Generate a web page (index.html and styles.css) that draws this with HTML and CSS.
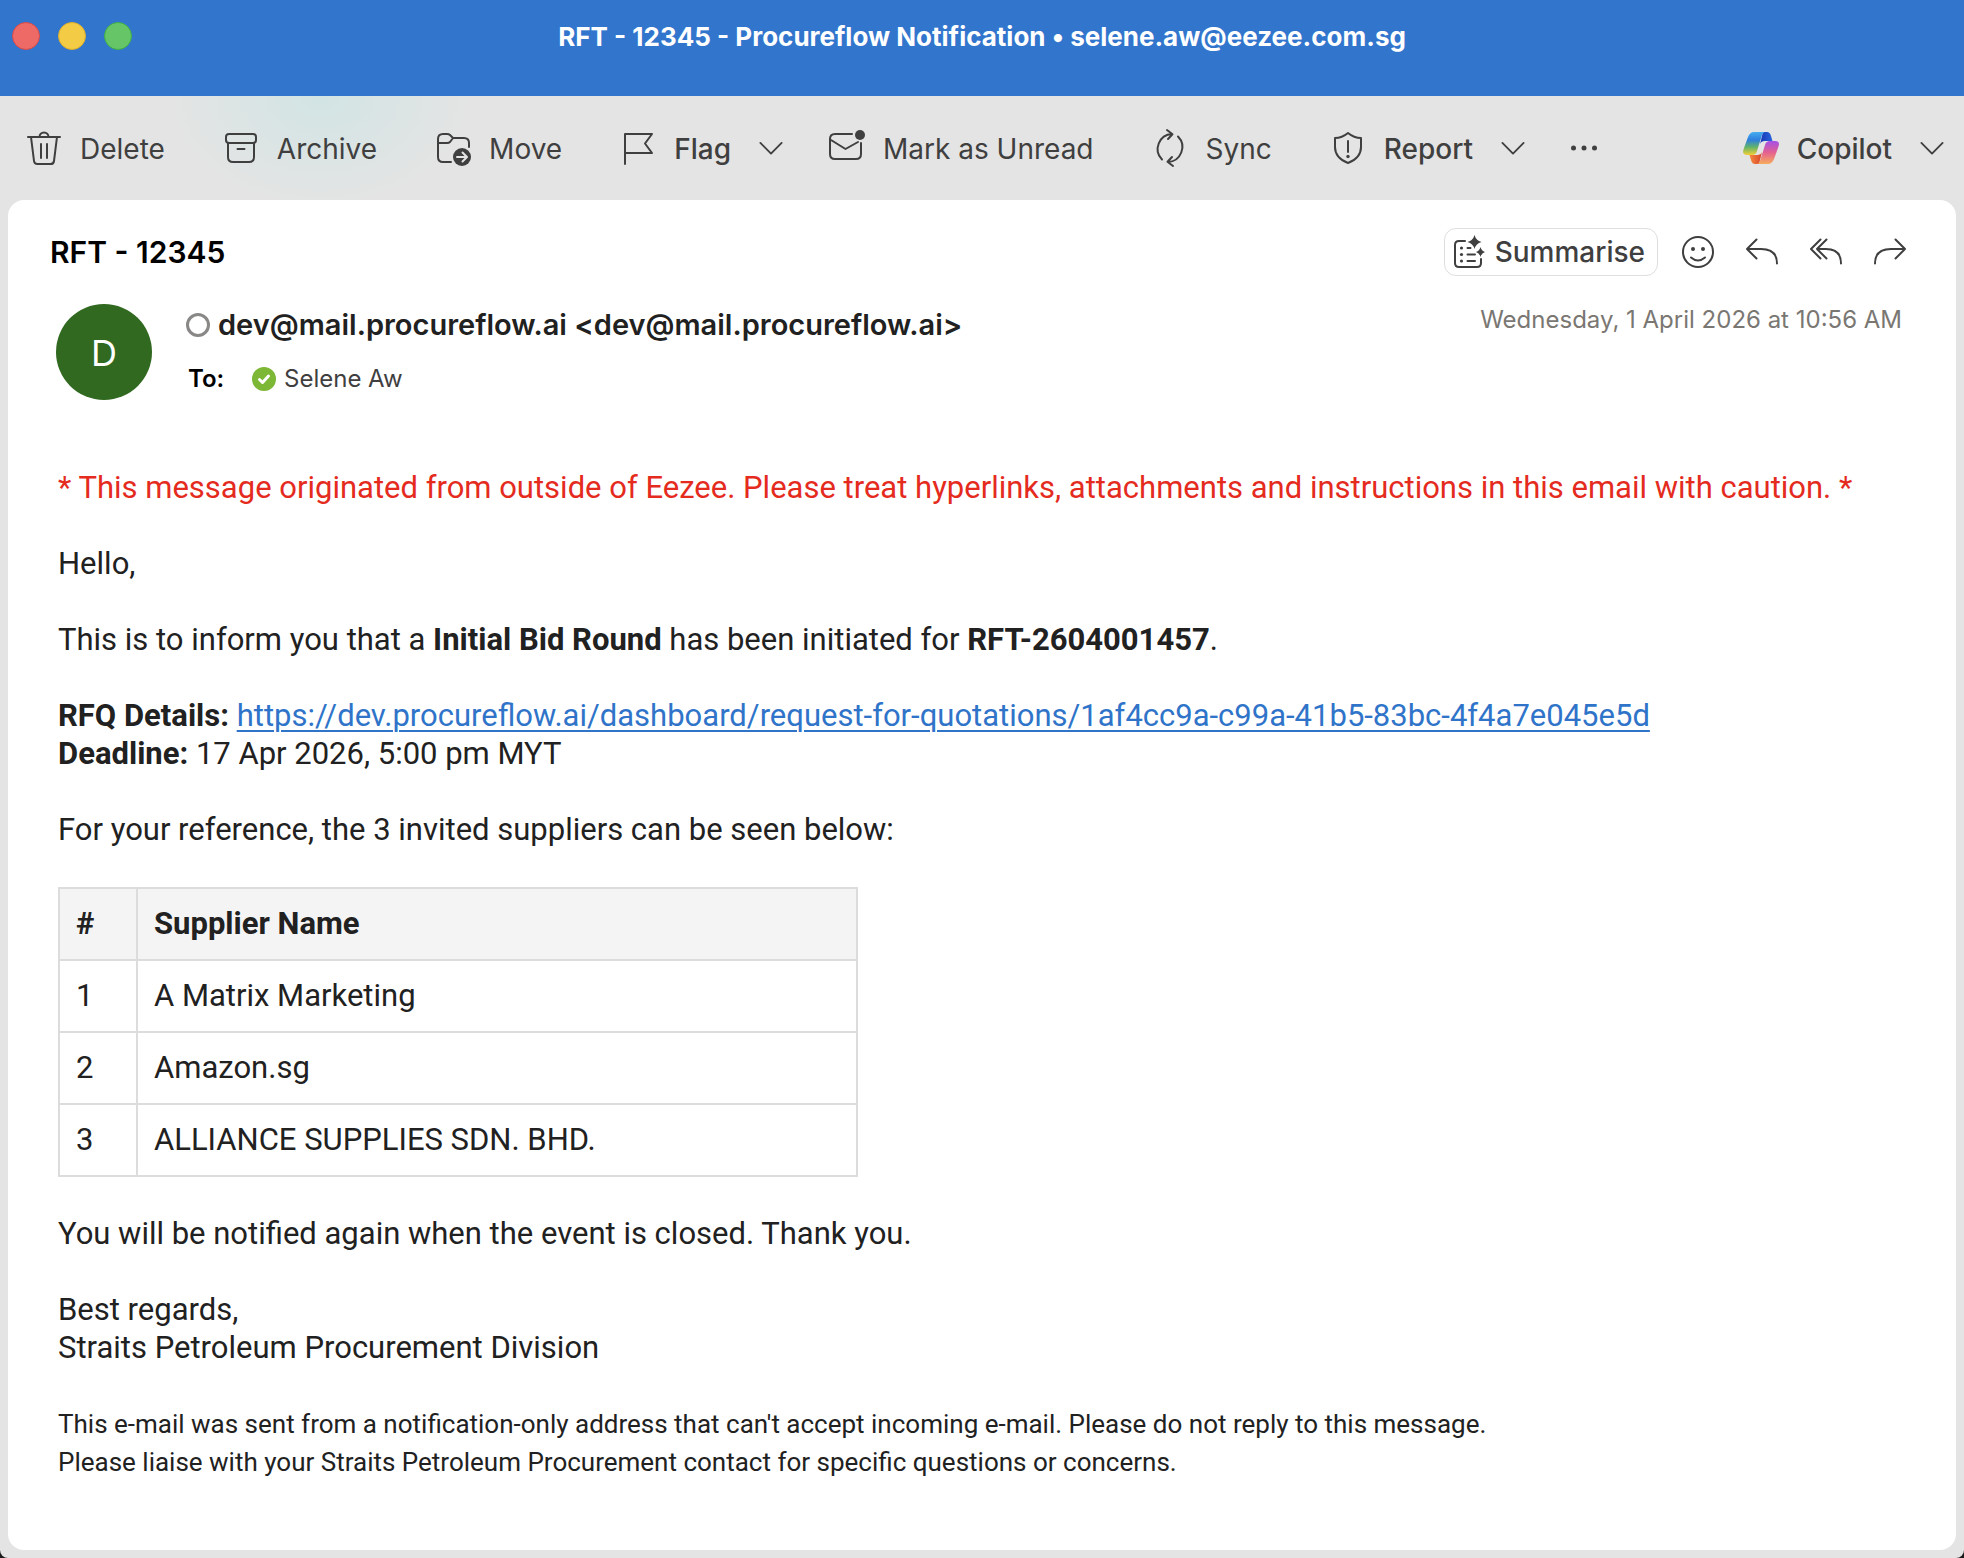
FILE: index.html
```html
<!DOCTYPE html>
<html lang="en">
<head>
  <meta charset="UTF-8" />
  <title>RFT - 12345 - Procureflow Notification</title>
  <meta name="viewport" content="width=device-width, initial-scale=1.0" />
  <link rel="stylesheet" href="styles.css">
</head>
<body>
  <div class="window">
    <header class="titlebar">
      <div class="lights">
        <button class="light red" aria-label="Close"></button>
        <button class="light yellow" aria-label="Minimise"></button>
        <button class="light green" aria-label="Zoom"></button>
      </div>
      <div class="window-title">RFT - 12345 - Procureflow Notification • selene.aw@eezee.com.sg</div>
    </header>

    <nav class="toolbar">
      <button class="tool">
        <svg class="icon" viewBox="0 0 36 36"><path d="M2 7H34M13.500 7a4.500 4.500 0 0 1 9 0M5 7l3 24q.4 3 3.400 3h13.200q3 0 3.400-3l3-24M15 14v14M21 14v14"/></svg>
        <span>Delete</span>
      </button>
      <button class="tool">
        <svg class="icon" viewBox="0 0 36 36"><rect x="3" y="4" width="30" height="9" rx="3"/><path d="M5 13v14q0 5 5 5h16q5 0 5-5V13M14.500 19h7"/></svg>
        <span>Archive</span>
      </button>
      <button class="tool">
        <svg class="icon" viewBox="0 0 36 36"><path d="M16 32H8q-5 0-5-5V9q0-5 5-5h4q2 0 3 1l3 3h11q5 0 5 5v4M3 13h9q2 0 3-1l3-4"/><circle class="solid" cx="27" cy="27" r="9"/><path class="knock" d="M22 27h9M27.500 22.500L32 27l-4.500 4.500"/></svg>
        <span>Move</span>
      </button>
      <button class="tool dropdown">
        <svg class="icon" viewBox="0 0 36 36"><path d="M5 34V4H32L25 13.500L32 23H5"/></svg>
        <span>Flag</span>
        <svg class="chevron" viewBox="0 0 26 26"><path d="M1.500 7.500L13 19L24.500 7.500"/></svg>
      </button>
      <button class="tool">
        <svg class="icon" viewBox="0 0 36 36"><path d="M23 4H6q-5 0-5 5v15q0 5 5 5h21q5 0 5-5V13M2 10l14.500 9L29 12"/><circle class="solid" cx="31" cy="5" r="5"/></svg>
        <span>Mark as Unread</span>
      </button>
      <button class="tool">
        <svg class="icon" viewBox="0 0 36 36"><path d="M10 29.500A15 15 0 0 1 20 4M15 0l5.500 4.200L16 9M26 6.500A15 15 0 0 1 16 32M21 36l-5.500-4.200L20 27"/></svg>
        <span>Sync</span>
      </button>
      <button class="tool dropdown">
        <svg class="icon" viewBox="0 0 36 36"><path d="M18 3q6 5 13 5v9q0 11-13 16Q5 28 5 17V8q7 0 13-5ZM18 11v11"/><circle class="solid" cx="18" cy="26.500" r="1.700"/></svg>
        <span>Report</span>
        <svg class="chevron" viewBox="0 0 26 26"><path d="M1.500 7.500L13 19L24.500 7.500"/></svg>
      </button>
      <button class="tool" aria-label="More">
        <svg class="dots" viewBox="0 0 26 26"><g class="solid"><circle cx="2.500" cy="13" r="2.500"/><circle cx="13" cy="13" r="2.500"/><circle cx="23.500" cy="13" r="2.500"/></g></svg>
      </button>
      <button class="tool dropdown copilot">
        <svg class="icon" viewBox="0 -2 36 36">
          <defs>
            <linearGradient id="cool" x1="0" y1="0" x2="0" y2="1"><stop offset="0" stop-color="#45aef0"/><stop offset=".35" stop-color="#2f7fdd"/><stop offset=".65" stop-color="#5fb36b"/><stop offset="1" stop-color="#f3cf35"/></linearGradient>
            <linearGradient id="warm" x1="0" y1="1" x2="0" y2="0"><stop offset="0" stop-color="#a44fe8"/><stop offset=".5" stop-color="#e4618f"/><stop offset="1" stop-color="#f7ac5c"/></linearGradient>
            <linearGradient id="navy"><stop offset="0" stop-color="#1736b5"/><stop offset="1" stop-color="#2a66dd"/></linearGradient>
            <linearGradient id="ember"><stop offset="0" stop-color="#d6452c"/><stop offset="1" stop-color="#f78a3e"/></linearGradient>
          </defs>
          <path fill="url(#navy)" stroke="none" d="M20 0h4q3 0 4 4l1.500 5H22q-4 0-5 3z"/>
          <path fill="url(#ember)" stroke="none" transform="rotate(180 18 16)" d="M20 0h4q3 0 4 4l1.500 5H22q-4 0-5 3z"/>
          <path fill="url(#cool)" stroke="none" d="M22.500 0H11Q7 0 5 5L1 16Q-2 23 4 23h5q4 0 5-4l4.500-14.500Q19.500 0 22.500 0Z"/>
          <path fill="url(#warm)" stroke="none" transform="rotate(180 18 16)" d="M22.500 0H11Q7 0 5 5L1 16Q-2 23 4 23h5q4 0 5-4l4.500-14.500Q19.500 0 22.500 0Z"/>
        </svg>
        <span>Copilot</span>
        <svg class="chevron" viewBox="0 0 26 26"><path d="M1.500 7.500L13 19L24.500 7.500"/></svg>
      </button>
    </nav>

    <main class="message">
      <div class="subject-row">
        <h1>RFT - 12345</h1>
        <div class="actions">
          <button class="summarise">
            <svg class="small-icon" viewBox="0 0 32 32"><path d="M12 5H6Q2 5 2 9v18q0 4 4 4h18q4 0 4-4v-4M14.500 12h3M14.500 18.500H22M14.500 25H22"/><g class="solid"><circle cx="8.500" cy="12" r="1.600"/><circle cx="8.500" cy="18.500" r="1.600"/><circle cx="8.500" cy="25" r="1.600"/><path d="M21.500-1q1.500 5.500 7 7-5.500 1.500-7 7-1.500-5.500-7-7 5.500-1.500 7-7ZM27.500 11q1 4 4.500 5-3.500 1-4.500 5-1-4-4.500-5 3.500-1 4.500-5Z"/></g></svg>
            <span>Summarise</span>
          </button>
          <button class="action" aria-label="React"><svg class="small-icon" viewBox="0 0 32 32"><circle cx="16" cy="16" r="15"/><path d="M9 21.500q7 6 14 0"/><g class="solid"><circle cx="11" cy="13" r="2"/><circle cx="21" cy="13" r="2"/></g></svg></button>
          <button class="action" aria-label="Reply"><svg class="small-icon" viewBox="0 0 32 32"><path d="M10.500 3.500L1 13l9.500 9.500M1 13h14q16 0 16 14.500"/></svg></button>
          <button class="action" aria-label="Reply all"><svg class="small-icon" viewBox="0 0 32 32"><path d="M10.500 3.500L1 13l9.500 9.500M16.500 3.500L7 13l9.500 9.500M7 13h9q15 0 15 14.500"/></svg></button>
          <button class="action" aria-label="Forward"><svg class="small-icon" viewBox="0 0 32 32"><path d="M21.500 3.500L31 13l-9.500 9.500M31 13H17Q1 13 1 27.500"/></svg></button>
        </div>
      </div>

      <div class="sender-row">
        <div class="avatar">D</div>
        <div class="people">
          <div class="from"><span class="presence"></span>dev@mail.procureflow.ai &lt;dev@mail.procureflow.ai&gt;</div>
          <div class="to">
            <b>To:</b>
            <svg class="check" viewBox="0 0 24 24"><circle cx="12" cy="12" r="12"/><path d="M7.500 12.500l3 3 6-6.500"/></svg>
            <span>Selene Aw</span>
          </div>
        </div>
        <time class="date" datetime="2026-04-01T10:56">Wednesday, 1 April 2026 at 10:56 AM</time>
      </div>

      <article class="mail">
        <p class="caution">* This message originated from outside of Eezee. Please treat hyperlinks, attachments and instructions in this email with caution. *</p>
        <p>Hello,</p>
        <p>This is to inform you that a <b>Initial Bid Round</b> has been initiated for <b>RFT-2604001457</b>.</p>
        <p>
          <b>RFQ Details:</b> <a href="https://dev.procureflow.ai/dashboard/request-for-quotations/1af4cc9a-c99a-41b5-83bc-4f4a7e045e5d">https://dev.procureflow.ai/dashboard/request-for-quotations/1af4cc9a-c99a-41b5-83bc-4f4a7e045e5d</a><br>
          <b>Deadline:</b> 17 Apr 2026, 5:00 pm MYT
        </p>
        <p>For your reference, the 3 invited suppliers can be seen below:</p>
        <table>
          <thead>
            <tr><th class="num">#</th><th>Supplier Name</th></tr>
          </thead>
          <tbody>
            <tr><td>1</td><td>A Matrix Marketing</td></tr>
            <tr><td>2</td><td>Amazon.sg</td></tr>
            <tr><td>3</td><td>ALLIANCE SUPPLIES SDN. BHD.</td></tr>
          </tbody>
        </table>
        <p>You will be notified again when the event is closed. Thank you.</p>
        <p>Best regards,<br>Straits Petroleum Procurement Division</p>
        <p class="footnote">This e-mail was sent from a notification-only address that can't accept incoming e-mail. Please do not reply to this message.<br>Please liaise with your Straits Petroleum Procurement contact for specific questions or concerns.</p>
      </article>
    </main>
  </div>
</body>
</html>
```
FILE: styles.css
```css
* {
  box-sizing: border-box;
}

body {
  margin: 0;
  background-color: #1c1c1c;
  font-family: Inter, "Liberation Sans", sans-serif;
  color: #212121;
}

button {
  padding: 0;
  border: none;
  background: none;
  font: inherit;
  color: inherit;
  cursor: pointer;
}

svg {
  flex: none;
  fill: none;
  stroke: #3f3f3f;
  stroke-width: 2;
  stroke-linecap: round;
  stroke-linejoin: round;
  overflow: visible;
}

.window {
  display: flex;
  flex-direction: column;
  min-height: 100vh;
  background-color: #e4e4e4;
  border-radius: 0 0 8px 8px;
  overflow: hidden;
}

/* title bar */
.titlebar {
  display: grid;
  grid-template-columns: 1fr auto 1fr;
  align-items: center;
  height: 96px;
  padding: 0 12px 24px;
  background-color: #3275cd;
}

.lights {
  display: flex;
  gap: 18px;
}

.light {
  width: 28px;
  height: 28px;
  border-radius: 50%;
  border: 1px solid;
}

.red { background-color: #ee6a66; border-color: #d64a4a; }
.yellow { background-color: #f4cb45; border-color: #dcae2c; }
.green { background-color: #66c667; border-color: #3fae47; }

.window-title {
  font-size: 26px;
  font-weight: 700;
  color: #fff;
}

/* toolbar */
.toolbar {
  display: flex;
  align-items: center;
  gap: 58px;
  height: 104px;
  padding: 0 20px 0 26px;
  background: radial-gradient(ellipse 150px 110px at 320px 0, #d2e4e4, #e4e4e4);
  font-size: 28px;
  color: #3f3f3f;
}

.tool {
  display: flex;
  align-items: center;
  gap: 18px;
  white-space: nowrap;
}

.tool span {
  padding-top: 2px;
}

.dropdown {
  margin-right: -12px;
  font-weight: 500;
}

.copilot {
  margin-left: auto;
  margin-right: 0;
}

.icon {
  width: 36px;
  height: 36px;
}

.chevron {
  width: 24px;
  height: 24px;
  margin-left: 10px;
}

.dots {
  width: 26px;
  height: 26px;
}

.small-icon {
  width: 32px;
  height: 32px;
}

.solid {
  fill: #3f3f3f;
  stroke: none;
}

.knock {
  stroke: #e4e4e4;
}

/* message card */
.message {
  flex: 1;
  margin: 0 8px 8px;
  padding: 28px 50px 20px 42px;
  background-color: #fff;
  border-radius: 16px;
}

.subject-row {
  display: flex;
  align-items: center;
  justify-content: space-between;
}

h1 {
  margin: 0;
  font-size: 30px;
  font-weight: 600;
  color: #000;
}

.actions {
  display: flex;
  align-items: center;
  gap: 32px;
}

.summarise {
  display: flex;
  align-items: center;
  gap: 10px;
  height: 48px;
  margin-right: -8px;
  padding: 0 12px 0 8px;
  border: 1px solid #dedede;
  border-radius: 12px;
  font-size: 28px;
  font-weight: 500;
  color: #3f3f3f;
}

.action {
  display: flex;
}

.sender-row {
  display: flex;
  margin-top: 28px;
  padding-left: 6px;
}

.avatar {
  width: 96px;
  height: 96px;
  border-radius: 50%;
  background-color: #30691f;
  color: #fff;
  font-size: 36px;
  line-height: 98px;
  text-align: center;
}

.people {
  flex: 1;
  margin-left: 34px;
}

.from {
  display: flex;
  align-items: center;
  gap: 8px;
  font-size: 29px;
  line-height: 42px;
  font-weight: 600;
}

.presence {
  width: 24px;
  height: 24px;
  border: 3px solid #8a8886;
  border-radius: 50%;
}

.to {
  display: flex;
  align-items: center;
  gap: 8px;
  margin-top: 16px;
  padding-left: 2px;
  font-size: 24px;
  line-height: 34px;
  color: #3f3f3f;
}

.to b {
  width: 56px;
  font-weight: 600;
  color: #000;
}

.check {
  width: 24px;
  height: 24px;
  fill: #7cb735;
  stroke: none;
}

.check path {
  fill: none;
  stroke: #fff;
  stroke-width: 3;
}

.date {
  margin-right: 4px;
  font-size: 24px;
  line-height: 32px;
  color: #7a7773;
}

/* mail body */
.mail {
  margin-top: 69px;
  padding-left: 8px;
  font-family: Roboto, "Liberation Sans", sans-serif;
  font-size: 31px;
  line-height: 38px;
}

.mail p {
  margin: 0 0 38px;
}

.mail a {
  color: #2f74c9;
  text-decoration-thickness: 2px;
  text-underline-offset: 4px;
}

.mail .caution {
  color: #e42b1e;
}

.mail .footnote {
  margin-bottom: 0;
  font-size: 26px;
}

table {
  width: 800px;
  max-width: 100%;
  margin-bottom: 38px;
  border-collapse: collapse;
}

th, td {
  padding: 16px;
  border: 2px solid #dcdcdc;
  text-align: left;
}

th {
  background-color: #f4f4f4;
}

.num {
  width: 78px;
}
```
